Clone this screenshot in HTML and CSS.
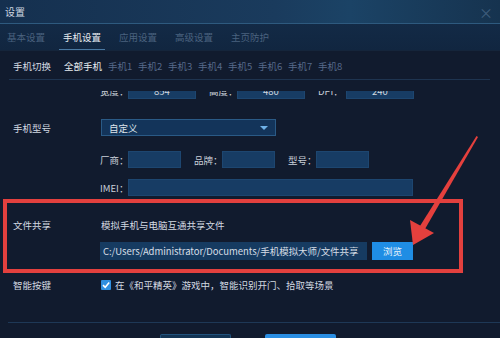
FILE: index.html
```html
<!DOCTYPE html>
<html lang="zh">
<head>
<meta charset="utf-8">
<link rel="stylesheet" href="styles.css">
</head>
<body>
<div class="win">
  <div class="titlebar">
    <span class="title">设置</span>
    <span class="close">×</span>
  </div>
  <div class="tabs">
    <span class="tab">基本设置</span>
    <span class="tab active">手机设置</span>
    <span class="tab">应用设置</span>
    <span class="tab">高级设置</span>
    <span class="tab">主页防护</span>
  </div>
  <div class="phones">
    <span class="plabel">手机切换</span>
    <span class="pall">全部手机</span>
    <span class="pitem">手机1</span>
    <span class="pitem">手机2</span>
    <span class="pitem">手机3</span>
    <span class="pitem">手机4</span>
    <span class="pitem">手机5</span>
    <span class="pitem">手机6</span>
    <span class="pitem">手机7</span>
    <span class="pitem">手机8</span>
  </div>
  <div class="sep"></div>
  <div class="scroll">
    <div class="row row-size">
      <span class="label"></span>
      <div class="fields">
        <span class="flabel">宽度：</span><span class="input num">854</span>
        <span class="flabel">高度：</span><span class="input num">480</span>
        <span class="flabel">DPI：</span><span class="input num">240</span>
      </div>
    </div>
    <div class="row row-model">
      <span class="label">手机型号</span>
      <div class="select"><span>自定义</span><span class="caret"></span></div>
    </div>
    <div class="row row-vendor">
      <span class="label"></span>
      <div class="fields">
        <span class="flabel">厂商：</span><span class="input short"></span>
        <span class="flabel">品牌：</span><span class="input short"></span>
        <span class="flabel">型号：</span><span class="input short"></span>
      </div>
    </div>
    <div class="row row-imei">
      <span class="label"></span>
      <div class="fields">
        <span class="flabel">IMEI：</span><span class="input long"></span>
      </div>
    </div>
    <div class="row row-share">
      <span class="label">文件共享</span>
      <div class="share">
        <div class="share-desc">模拟手机与电脑互通共享文件</div>
        <div class="share-path">
          <span class="path">C:/Users/Administrator/Documents/手机模拟大师/文件共享</span>
          <span class="browse">浏览</span>
        </div>
      </div>
    </div>
    <div class="row row-smart">
      <span class="label">智能按键</span>
      <div class="check-line">
        <span class="check"><svg width="10" height="10" viewBox="0 0 10 10"><path d="M2 5.2 L4.2 7.3 L8.2 2.6" fill="none" stroke="#fff" stroke-width="1.6"/></svg></span>
        <span>在《和平精英》游戏中，智能识别开门、拾取等场景</span>
      </div>
    </div>
  </div>
  <div class="footer">
    <span class="btn btn-cancel"></span>
    <span class="btn btn-ok"></span>
  </div>

  <div class="annot-box"></div>
  <svg class="annot-arrow" width="500" height="338" viewBox="0 0 500 338">
    <polygon points="476.5,136 478,137 425,229 420,226" fill="#e5403d"/>
    <polygon points="413,245 410,220 434,233" fill="#e5403d"/>
  </svg>
</div>
</body>
</html>
```

FILE: styles.css
```css
* { box-sizing: border-box; }
html, body { margin: 0; padding: 0; }
body {
  width: 500px;
  height: 338px;
  overflow: hidden;
  background: #111b2e;
  font-family: "Noto Sans CJK SC", "Noto Sans", sans-serif;
  font-size: 9.5px;
  color: #d3d9e1;
}
.win {
  position: relative;
  width: 500px;
  height: 338px;
  display: flex;
  flex-direction: column;
}
.titlebar {
  height: 24px;
  display: flex;
  align-items: center;
  justify-content: space-between;
  padding: 0 7px 0 5px;
  background: linear-gradient(90deg, #15304f 0%, #1a3b5d 55%, #1b4366 70%, #16334f 100%);
  border-bottom: 1px solid #2e5a7f;
  font-size: 10px;
  color: #cfd7e0;
}
.close { color: #3f5d7d; font-size: 14px; line-height: 1; }
.tabs {
  height: 27px;
  display: flex;
  align-items: center;
  gap: 10px;
  padding-left: 3px;
  background: linear-gradient(180deg, #132a46, #112640);
  border-bottom: 1px solid #15253b;
}
.tab {
  position: relative;
  padding: 0 4px;
  color: #4a627f;
  height: 27px;
  line-height: 27px;
}
.tab.active { color: #e6ebf0; }
.tab.active::after {
  content: "";
  position: absolute;
  left: 0; right: 0; bottom: 1px;
  height: 1px;
  background: #4b7aa3;
}
.phones {
  height: 28px;
  display: flex;
  align-items: center;
  padding-left: 13px;
  padding-top: 2px;
  white-space: nowrap;
}
.plabel { width: 51px; color: #d6dce3; }
.pall { width: 44px; color: #e6ebf0; }
.pitem { width: 30px; color: #56698a; }
.sep {
  height: 1px;
  margin: 0 10px 0 9px;
  background: #1e3450;
}
.scroll {
  margin-top: 11px;
  height: 231px;
  overflow: hidden;
}
.row {
  display: flex;
  align-items: center;
  white-space: nowrap;
}
.label {
  width: 100px;
  padding-left: 13px;
  flex: none;
}
.fields { display: flex; align-items: center; }
.flabel { width: 28px; flex: none; color: #c9d0d9; white-space: nowrap; overflow: visible; }
.input {
  flex: none;
  height: 17px;
  background: #173c64;
  border: 1px solid #1d4670;
  display: inline-flex;
  align-items: center;
  justify-content: center;
  color: #cfd7df;
}
.num { width: 68px; margin-right: 13px; }
.short { width: 53px; margin-right: 13px; }
.long { width: 285px; }
.row-size { margin-top: -9px; height: 17px; }
.row-model { margin-top: 20px; height: 17px; }
.row-vendor { margin-top: 15px; height: 17px; }
.row-vendor .short { margin-right: 13px; }
.row-imei { margin-top: 11px; height: 17px; }
.select {
  margin-left: 1px;
  width: 175px;
  height: 17px;
  display: flex;
  align-items: center;
  justify-content: space-between;
  padding: 0 7px;
  background: #13345a;
  border: 1px solid #2a5a86;
  color: #dfe5eb;
}
.caret {
  width: 0; height: 0;
  border-left: 4px solid transparent;
  border-right: 4px solid transparent;
  border-top: 4px solid #6fb1e8;
}
.row-share { margin-top: 22px; align-items: flex-start; }
.row-share .label { line-height: 14px; }
.share-desc { line-height: 14px; margin-left: 1px; }
.share-path {
  margin-top: 10px;
  display: flex;
  gap: 5px;
}
.path {
  width: 267px;
  height: 18px;
  background: #163b61;
  display: flex;
  align-items: center;
  padding-left: 3px;
  font-size: 9.5px;
  letter-spacing: -0.05px;
  color: #d7dee6;
  white-space: nowrap;
  overflow: hidden;
}
.browse {
  width: 41px;
  height: 18px;
  background: #1f8de4;
  color: #e8f2fb;
  display: flex;
  align-items: center;
  justify-content: center;
}
.row-smart { margin-top: 18px; height: 14px; }
.check-line { display: flex; align-items: center; gap: 4px; margin-left: 1px; }
.check {
  width: 10px; height: 10px;
  background: #2f8fe0;
  border-radius: 1px;
  display: flex;
}
.footer {
  border-top: 1px solid #1e3856;
  margin-left: 8px;
  height: 16px;
  display: flex;
  padding-top: 11px;
  padding-left: 152px;
  gap: 34px;
}
.btn { width: 71px; height: 6px; border-radius: 2px 2px 0 0; }
.btn-cancel { background: #123454; border: 1px solid #21527c; border-bottom: none; }
.btn-ok { background: #2a8ee2; }
.annot-box {
  position: absolute;
  left: 3px;
  top: 199px;
  width: 460px;
  height: 74px;
  border: 4px solid #e3403e;
}
.annot-arrow {
  position: absolute;
  left: 0; top: 0;
}
```
